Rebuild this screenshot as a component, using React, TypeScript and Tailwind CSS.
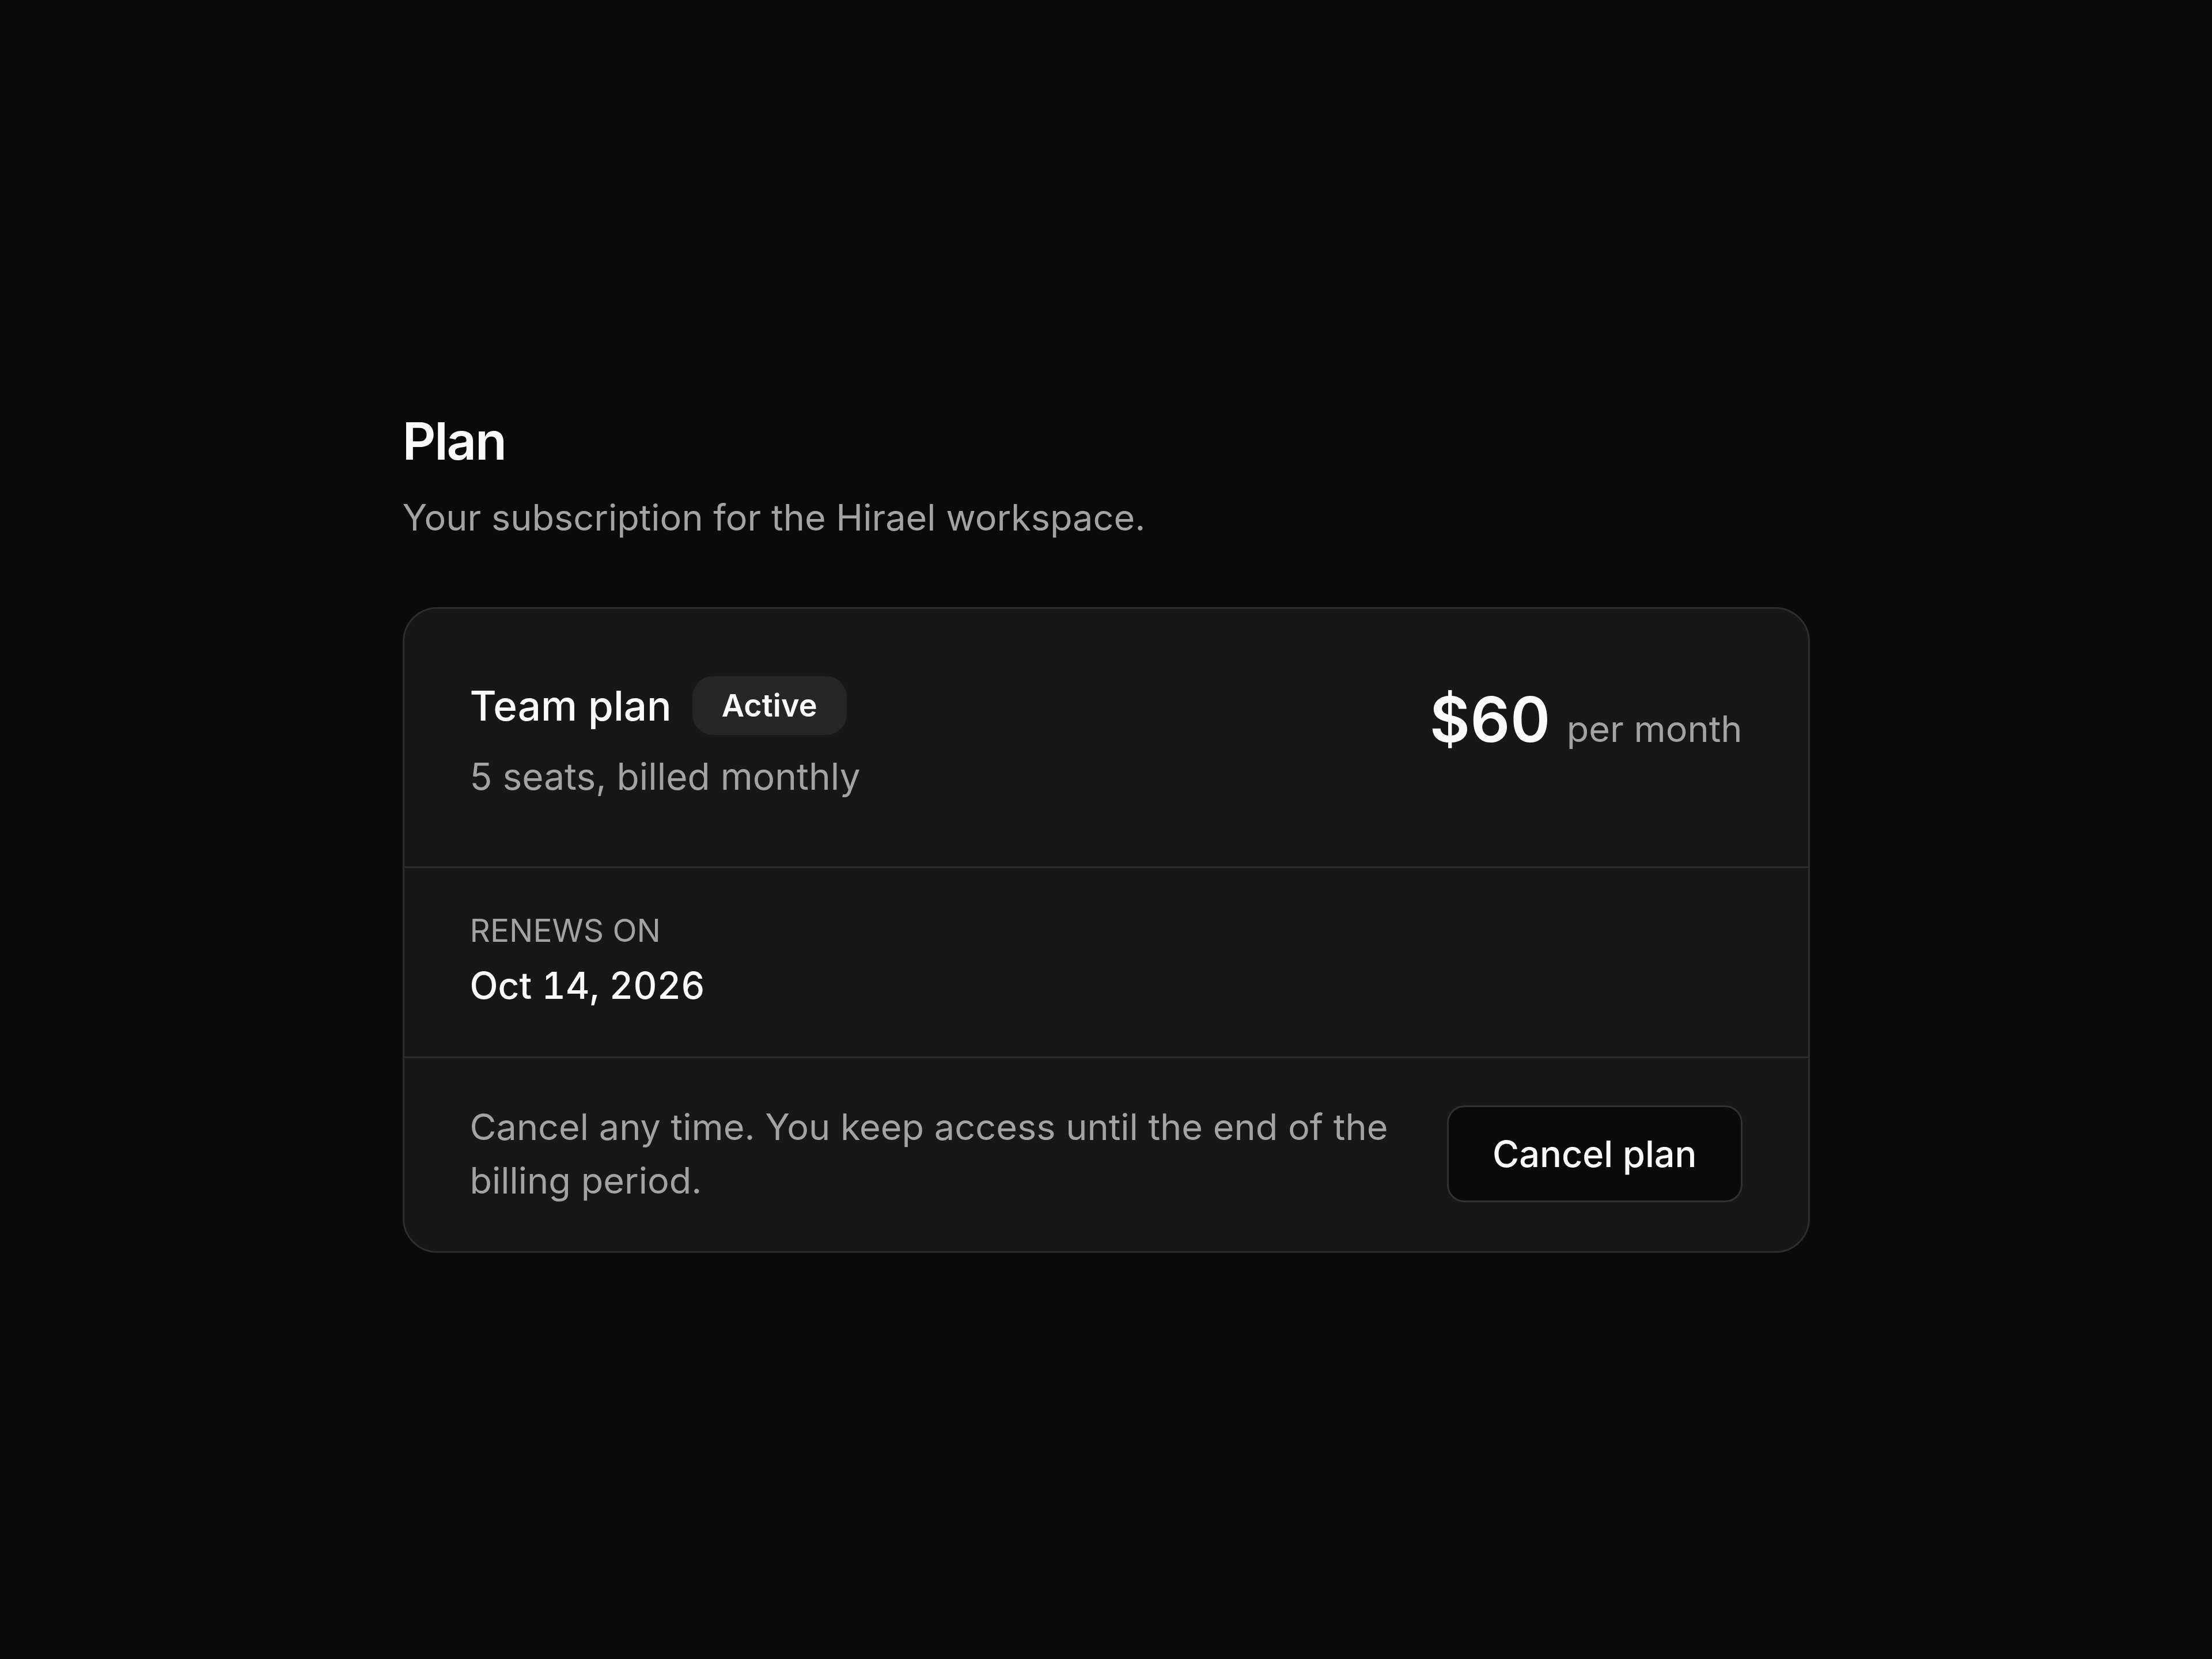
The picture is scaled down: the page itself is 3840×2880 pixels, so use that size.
export default function App() {
  return (
    <div className="flex min-h-screen items-center justify-center bg-[#0a0a0a] pt-[6px] font-[Inter,sans-serif] text-[#fafafa]">
      <div className="w-[2443px]">
        <h1 className="text-[90px] leading-[108px] font-semibold tracking-tight">Plan</h1>
        <p className="mt-[36px] text-[63px] leading-[84px] text-[#a3a3a3]">
          Your subscription for the Hirael workspace.
        </p>

        <div className="mt-[114px] rounded-[60px] border-[3px] border-[#2d2d2d] bg-[#171717]">
          <div className="flex items-start justify-between px-[114px] pt-[117px] pb-[114px]">
            <div>
              <div className="flex items-center gap-[36px]">
                <h2 className="text-[71px] leading-[96px] font-medium">Team plan</h2>
                <span className="rounded-[36px] bg-[#262626] px-[51px] py-[9px] text-[54px] leading-[84px] font-semibold">
                  Active
                </span>
              </div>
              <p className="mt-[30px] text-[64px] leading-[84px] text-[#a3a3a3]">5 seats, billed monthly</p>
            </div>
            <div className="mt-[15px] flex items-baseline gap-[28px]">
              <span className="text-[108px] leading-[120px] font-semibold tabular-nums">$60</span>
              <span className="text-[63px] leading-[84px] text-[#a3a3a3]">per month</span>
            </div>
          </div>

          <div className="border-t-[3px] border-[#2d2d2d] px-[114px] pt-[72px] pb-[81px]">
            <p className="text-[55px] leading-[72px] text-[#a3a3a3] uppercase">Renews on</p>
            <p className="mt-[18px] text-[64px] leading-[84px] font-medium tabular-nums">Oct 14, 2026</p>
          </div>

          <div className="flex items-center gap-[72px] border-t-[3px] border-[#2d2d2d] px-[114px] pt-[73px] pb-[76px]">
            <p className="flex-1 text-[63px] leading-[93px] text-[#a3a3a3]">
              Cancel any time. You keep access until the end of the billing period.
            </p>
            <button className="rounded-[30px] border-[3px] border-[#313131] bg-[#0a0a0a] px-[76px] py-[39px] text-[63px] leading-[84px] font-medium">
              Cancel plan
            </button>
          </div>
        </div>
      </div>
    </div>
  );
}
